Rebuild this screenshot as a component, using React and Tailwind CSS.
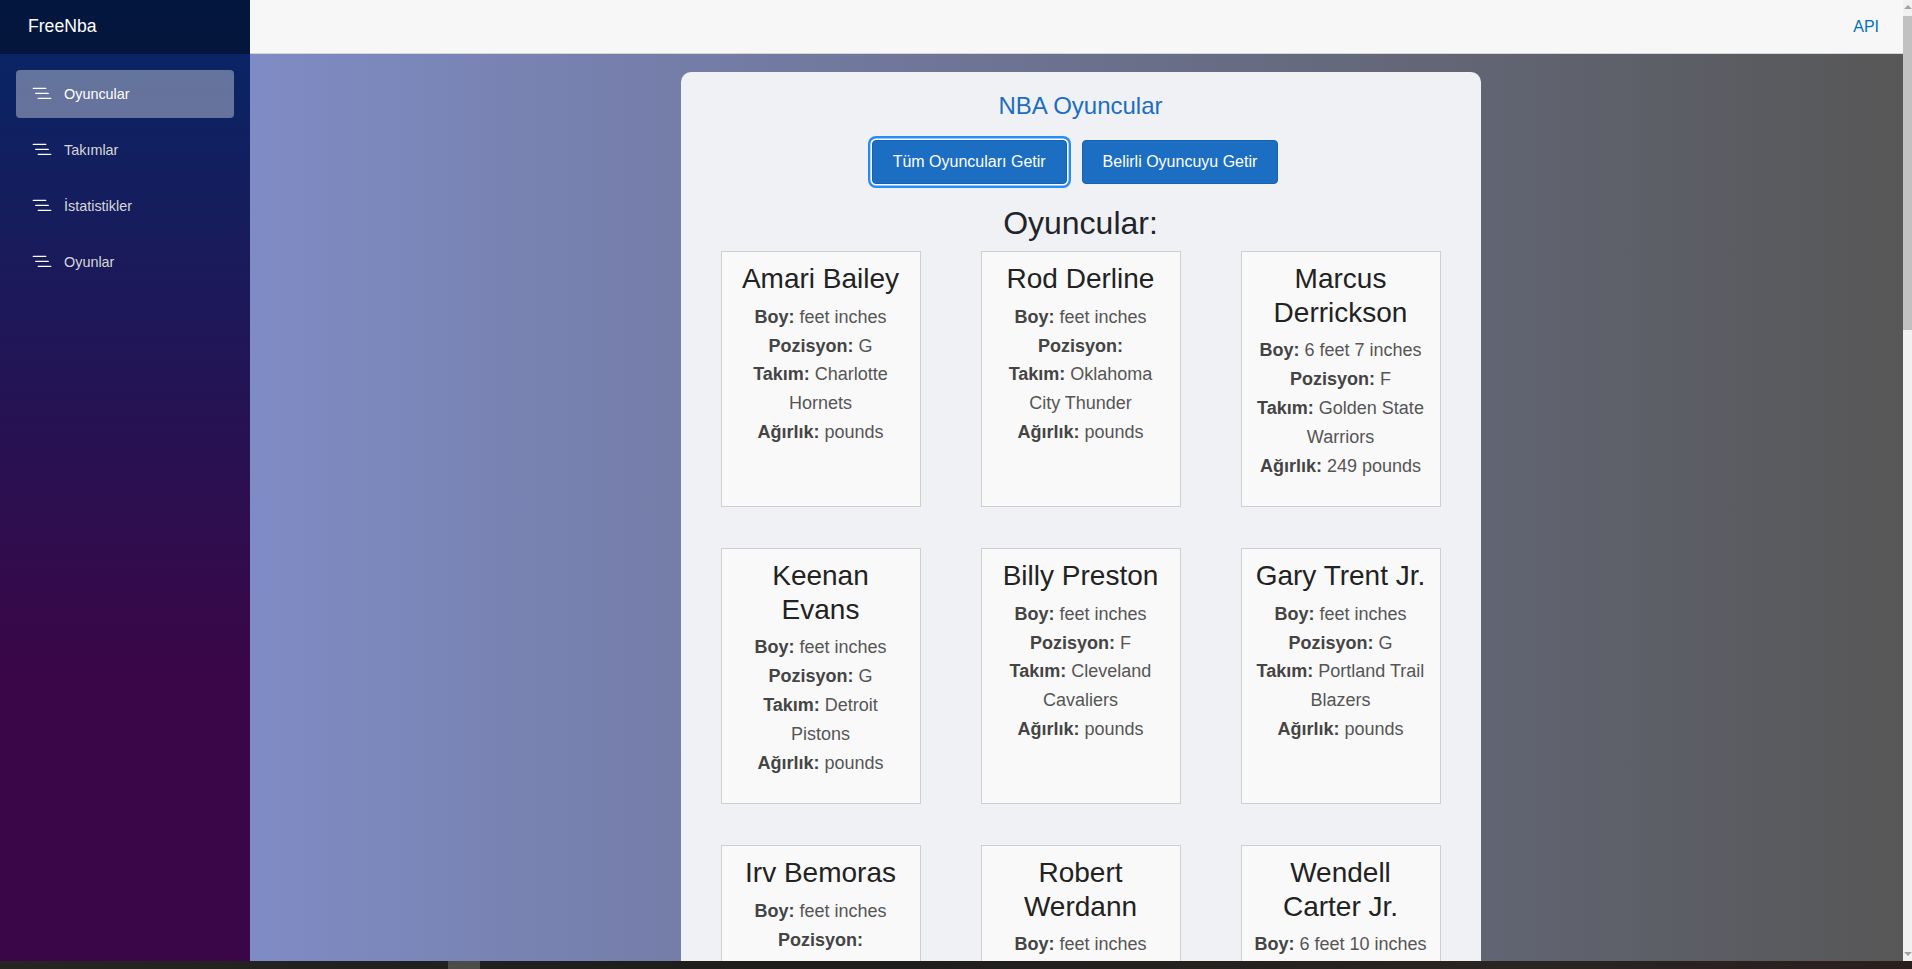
import React from "react";

const players = [
  { name: "Amari Bailey", boy: "feet inches", pos: "G", team: "Charlotte Hornets", weight: "pounds" },
  { name: "Rod Derline", boy: "feet inches", pos: "", team: "Oklahoma City Thunder", weight: "pounds" },
  { name: "Marcus Derrickson", boy: "6 feet 7 inches", pos: "F", team: "Golden State Warriors", weight: "249 pounds" },
  { name: "Keenan Evans", boy: "feet inches", pos: "G", team: "Detroit Pistons", weight: "pounds" },
  { name: "Billy Preston", boy: "feet inches", pos: "F", team: "Cleveland Cavaliers", weight: "pounds" },
  { name: "Gary Trent Jr.", boy: "feet inches", pos: "G", team: "Portland Trail Blazers", weight: "pounds" },
  { name: "Irv Bemoras", boy: "feet inches", pos: "", team: "Milwaukee Bucks", weight: "pounds" },
  { name: "Robert Werdann", boy: "feet inches", pos: "C", team: "Denver Nuggets", weight: "pounds" },
  { name: "Wendell Carter Jr.", boy: "6 feet 10 inches", pos: "C", team: "Orlando Magic", weight: "270 pounds" },
];

const navItems = ["Oyuncular", "Takımlar", "İstatistikler", "Oyunlar"];

function NavIcon() {
  return (
    <svg width="20" height="20" viewBox="0 0 16 16" fill="#ffffff" className="mr-3 shrink-0 -mt-px">
      <path
        fillRule="evenodd"
        d="M4.5 11.5A.5.5 0 0 1 5 11h10a.5.5 0 0 1 0 1H5a.5.5 0 0 1-.5-.5m-2-4A.5.5 0 0 1 3 7h10a.5.5 0 0 1 0 1H3a.5.5 0 0 1-.5-.5m-2-4A.5.5 0 0 1 1 3h10a.5.5 0 0 1 0 1H1a.5.5 0 0 1-.5-.5"
      />
    </svg>
  );
}

function Sidebar() {
  return (
    <aside className="w-[250px] shrink-0 h-full flex flex-col bg-[linear-gradient(180deg,rgb(5,39,103)_0%,#3a0647_70%)]">
      <div className="h-[54px] shrink-0 bg-[rgba(0,0,0,0.4)] flex items-center pl-[28px]">
        <span className="text-white text-[17.6px] leading-none">FreeNba</span>
      </div>
      <nav className="px-4 pt-4 flex flex-col gap-2">
        {navItems.map((item, i) => (
          <div
            key={item}
            className={
              i === 0
                ? "h-12 rounded flex items-center px-4 pt-px text-[14.4px] text-white bg-[rgba(255,255,255,0.37)]"
                : "h-12 rounded flex items-center px-4 pt-px text-[14.4px] text-[#d7d7d7]"
            }
          >
            <NavIcon />
            <span>{item}</span>
          </div>
        ))}
      </nav>
    </aside>
  );
}

function PlayerCard({ p }) {
  return (
    <div className="h-[256px] bg-[#f9f9f9] border border-[#cfcfd1] px-[10px] pt-[10px] text-center overflow-hidden">
      <h3 className="text-[28px] leading-[1.2] text-[#222222] mb-[7px] font-normal">{p.name}</h3>
      <div className="text-[18px] leading-[1.6] text-[#555555]">
        <p>
          <b className="font-bold text-[#444444]">Boy:</b> {p.boy}
        </p>
        <p>
          <b className="font-bold text-[#444444]">Pozisyon:</b> {p.pos}
        </p>
        <p>
          <b className="font-bold text-[#444444]">Takım:</b> {p.team}
        </p>
        <p>
          <b className="font-bold text-[#444444]">Ağırlık:</b> {p.weight}
        </p>
      </div>
    </div>
  );
}

function Main() {
  return (
    <div className="flex-1 min-w-0 h-full flex flex-col overflow-hidden bg-[linear-gradient(to_right,#7f8bc4,#575757)]">
      <header className="h-[54px] shrink-0 bg-[#f7f7f7] border-b border-[#d6d5d5] flex items-center justify-end px-6">
        <a className="text-[#0071c1] text-[16px] leading-none cursor-pointer">API</a>
      </header>
      <div className="pl-8 pr-6 pt-[18px]">
        <div className="max-w-[800px] mx-auto bg-[#f0f1f5] rounded-[10px] px-10 pt-5 pb-10">
          <h4 className="text-center text-[24px] leading-[1.2] text-[#1b6ec2] mb-[19px] font-normal">
            NBA Oyuncular
          </h4>
          <div className="flex justify-center gap-[15px]">
            <button className="h-[44px] px-5 shrink-0 rounded-[4px] bg-[#1b6ec2] border border-[#1861ac] text-white text-[16px] shadow-[0_0_0_0.1rem_white,0_0_0_0.25rem_#258cfb]">
              Tüm Oyuncuları Getir
            </button>
            <button className="h-[44px] px-5 shrink-0 mr-[11px] rounded-[4px] bg-[#1b6ec2] border border-[#1861ac] text-white text-[16px]">
              Belirli Oyuncuyu Getir
            </button>
          </div>
          <h2 className="text-center text-[32px] leading-[1.2] text-[#212529] mt-5 mb-[9px] font-normal">
            Oyuncular:
          </h2>
          <div className="grid grid-cols-[200px_200px_200px] justify-center gap-x-[60px] gap-y-[41px]">
            {players.map((p) => (
              <PlayerCard key={p.name} p={p} />
            ))}
          </div>
        </div>
      </div>
    </div>
  );
}

function Scrollbar() {
  return (
    <div className="w-[9px] shrink-0 h-full bg-[#f1f1f1] flex flex-col">
      <div className="h-[16px] shrink-0 flex items-start justify-center pt-[5px]">
        <div className="w-0 h-0 border-l-[4px] border-r-[4px] border-b-[4px] border-l-transparent border-r-transparent border-b-[#a3a3a3]" />
      </div>
      <div className="h-[314px] shrink-0 bg-[#c1c1c1]" />
      <div className="flex-1" />
      <div className="h-[16px] shrink-0 flex items-end justify-center pb-[5px]">
        <div className="w-0 h-0 border-l-[4px] border-r-[4px] border-t-[4px] border-l-transparent border-r-transparent border-t-[#a3a3a3]" />
      </div>
    </div>
  );
}

export default function App() {
  return (
    <div className="w-[1912px] h-[969px] flex flex-col overflow-hidden font-['Liberation_Sans',Arial,Helvetica,sans-serif]">
      <div className="flex h-[961px] shrink-0 overflow-hidden">
        <Sidebar />
        <Main />
        <Scrollbar />
      </div>
      <div className="h-[8px] shrink-0 flex bg-[linear-gradient(to_right,#252523,#1e1d1c_40%,#2a2422_80%,#2b1f1e)]">
        <div className="w-[448px]" />
        <div className="w-[32px] bg-[#4e4c49]" />
        <div className="flex-1" />
      </div>
    </div>
  );
}
